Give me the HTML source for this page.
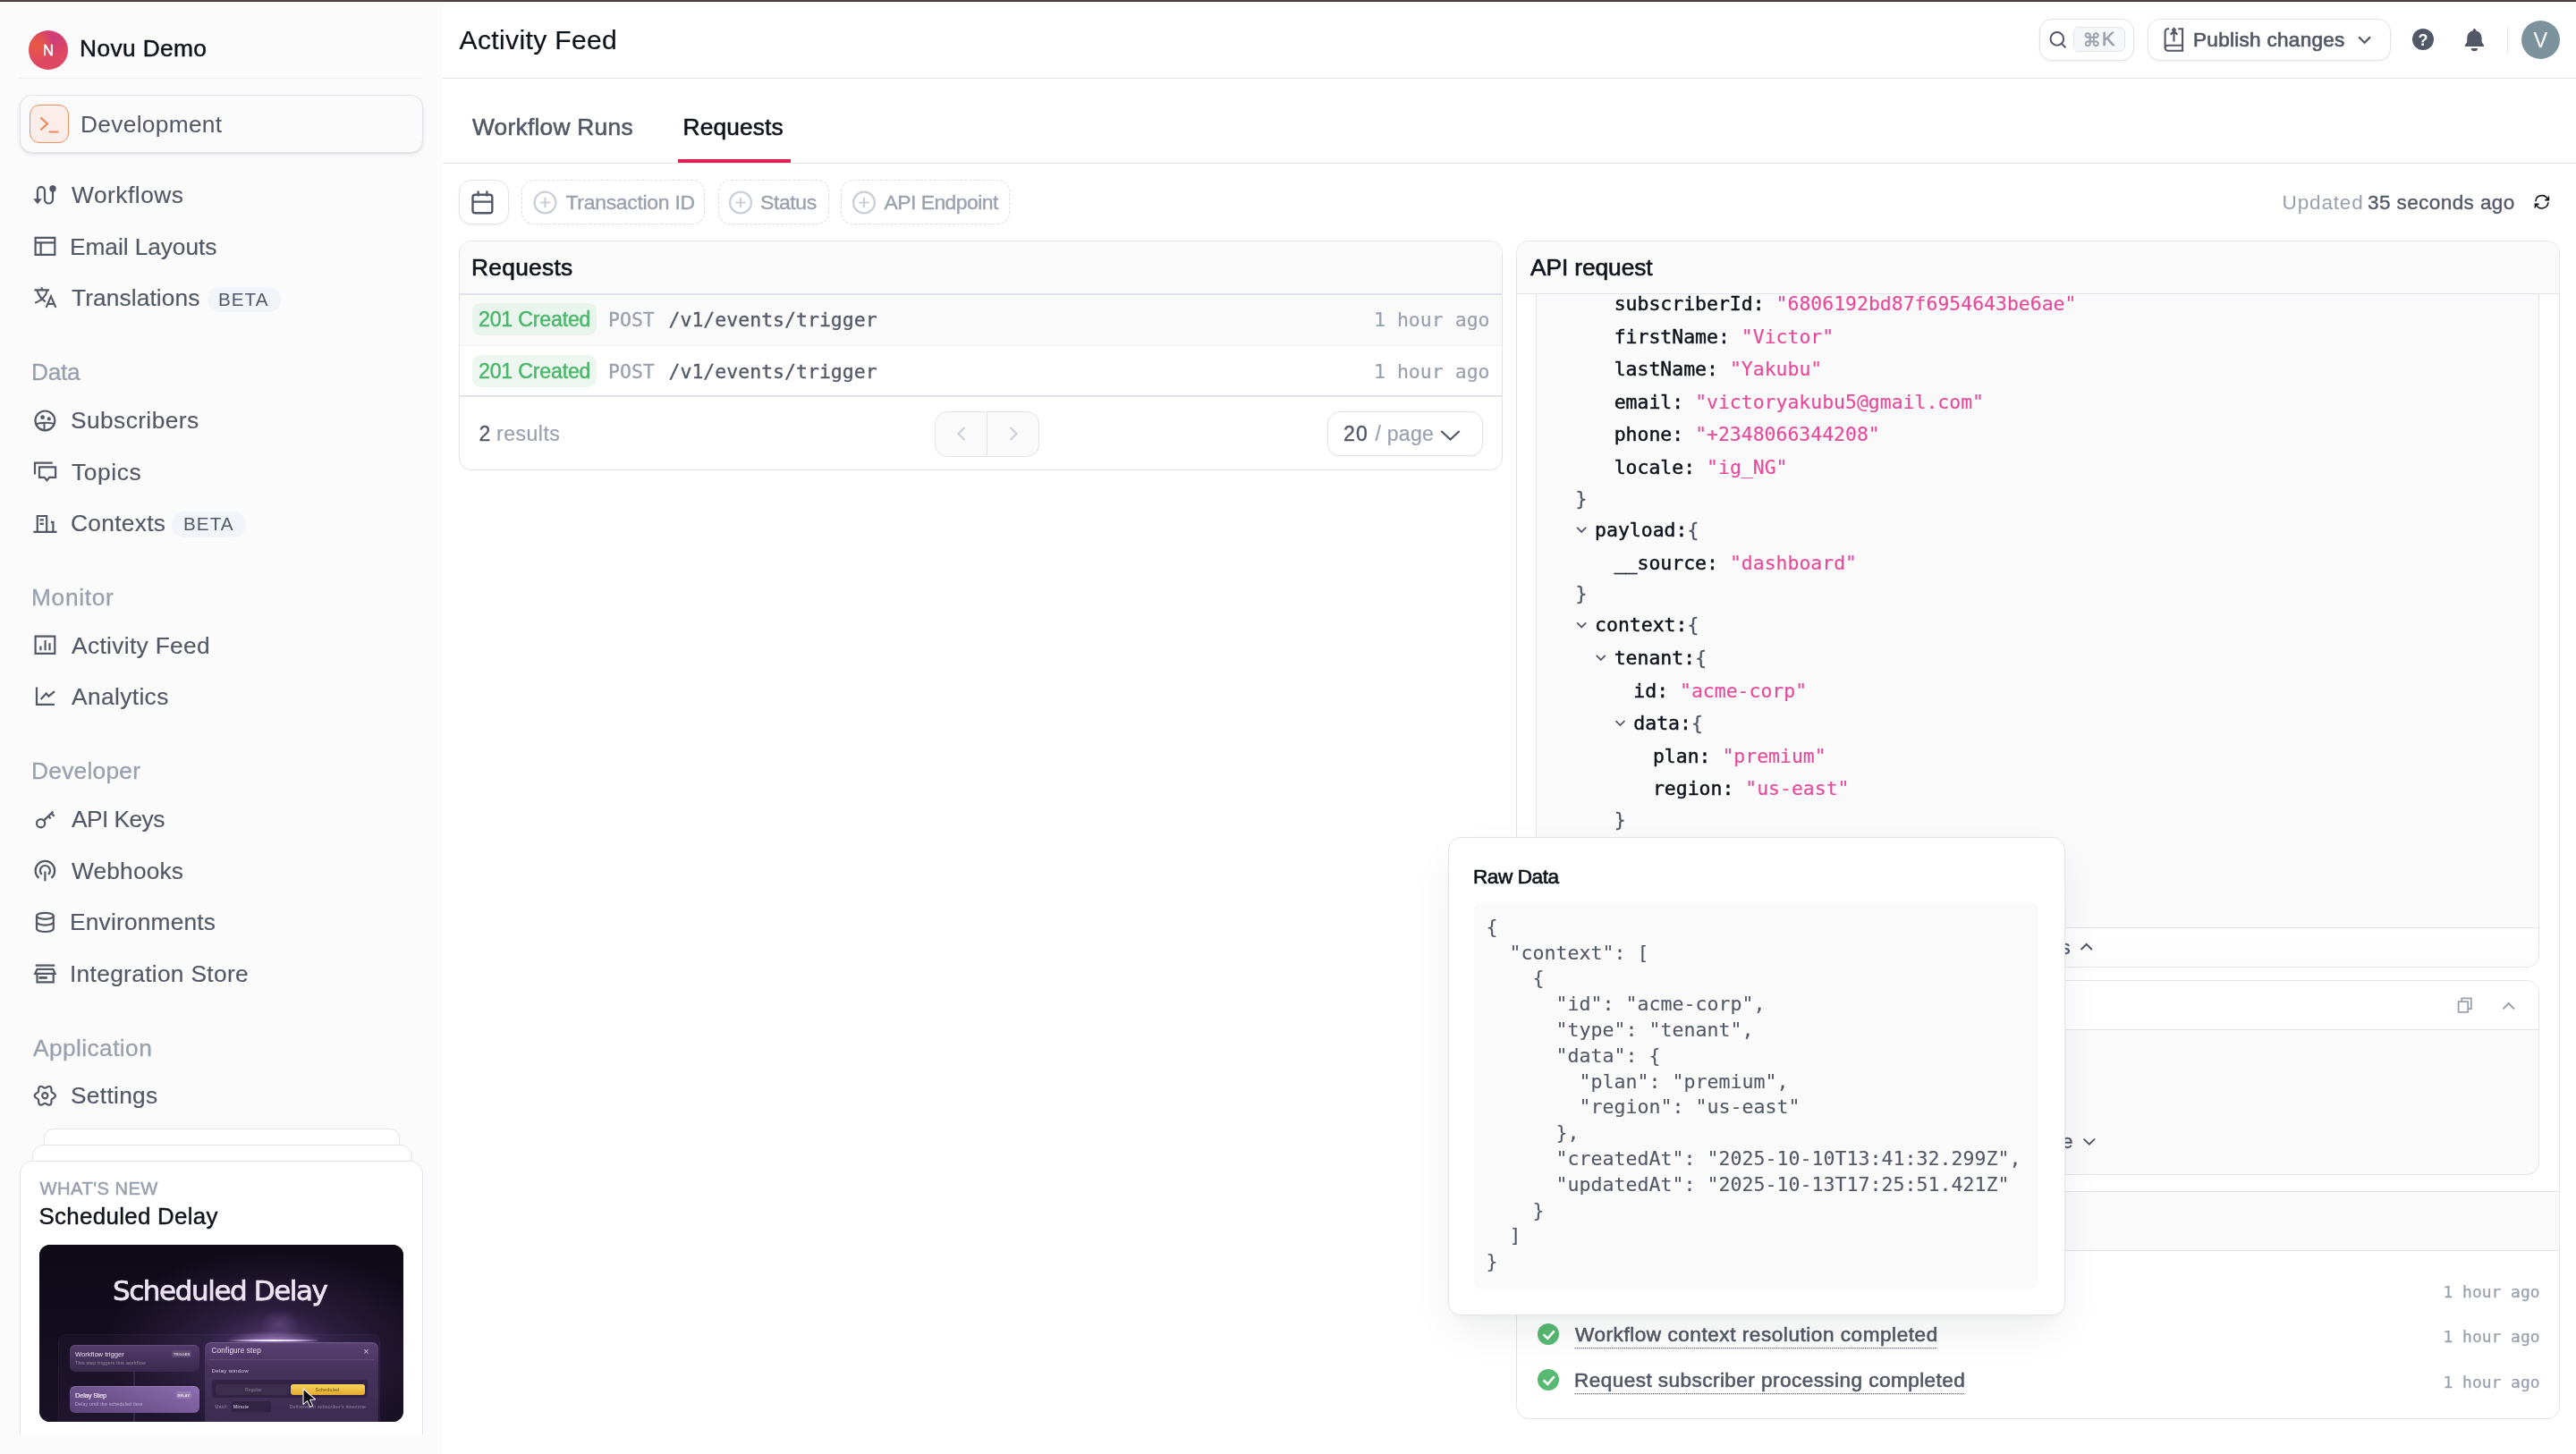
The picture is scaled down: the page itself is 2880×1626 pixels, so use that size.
<!DOCTYPE html>
<html lang="en"><head><meta charset="utf-8"><title>Activity Feed - Novu</title><style>
html,body{margin:0;padding:0;overflow:hidden}
body{width:2880px;height:1626px;overflow:hidden;position:relative;background:#fff;font-family:"Liberation Sans",sans-serif;}
#root{position:absolute;left:0;top:0;width:2880px;height:1626px;overflow:hidden;will-change:transform}
.b{position:absolute;box-sizing:border-box}
.t{position:absolute;white-space:pre;line-height:1;font-family:"Liberation Sans",sans-serif;-webkit-font-smoothing:antialiased}
</style></head>
<body>
<div id="root">
<div class="b" style="left:0px;top:3px;width:495px;height:1623px;background:#fbfbfb;"></div>
<div class="b" style="left:32px;top:34px;width:44px;height:44px;border-radius:50%;background:radial-gradient(circle at 22% 38%,#ea5a3f 0%,rgba(234,90,63,0) 42%),radial-gradient(circle at 62% 20%,#cb3c7a 0%,rgba(203,60,122,0) 45%),#de4862;"></div>
<span class="t" style="left:48.00px;top:47.81px;font-size:16.50px;color:#fff;-webkit-text-stroke:0.60px #fff;">N</span>
<span class="t" style="left:89.00px;top:41.27px;font-size:26.33px;color:#0e121b;letter-spacing:0.375px;-webkit-text-stroke:0.45px #0e121b;">Novu Demo</span>
<div class="b" style="left:22px;top:87px;width:451px;height:1px;background:#eef0f3;"></div>
<div class="b" style="left:22px;top:106px;width:451px;height:65px;border:1px solid #e1e4ea;border-radius:14px;background:#fbfbfc;box-shadow:0 2px 5px rgba(14,18,27,.08),0 1px 2px rgba(14,18,27,.05);"></div>
<div class="b" style="left:33px;top:117px;width:44px;height:43px;border:1px solid #f0905f;border-radius:11px;background:#fbeeea;"></div>
<span class="t" style="left:90.00px;top:125.77px;font-size:26.33px;color:#525866;letter-spacing:0.300px;">Development</span>
<span class="t" style="left:80.00px;top:204.77px;font-size:26.33px;color:#525866;letter-spacing:0.506px;-webkit-text-stroke:0.15px #525866;">Workflows</span>
<span class="t" style="left:78.00px;top:262.97px;font-size:26.33px;color:#525866;letter-spacing:-0.083px;-webkit-text-stroke:0.15px #525866;">Email Layouts</span>
<span class="t" style="left:80.00px;top:319.77px;font-size:26.33px;color:#525866;letter-spacing:0.086px;-webkit-text-stroke:0.15px #525866;">Translations</span>
<span class="t" style="left:35.00px;top:402.77px;font-size:26.33px;color:#99a0ae;letter-spacing:-0.350px;-webkit-text-stroke:0.30px #99a0ae;">Data</span>
<span class="t" style="left:79.00px;top:457.27px;font-size:26.33px;color:#525866;letter-spacing:0.405px;-webkit-text-stroke:0.15px #525866;">Subscribers</span>
<span class="t" style="left:80.00px;top:514.67px;font-size:26.33px;color:#525866;letter-spacing:0.600px;-webkit-text-stroke:0.15px #525866;">Topics</span>
<span class="t" style="left:79.00px;top:571.77px;font-size:26.33px;color:#525866;letter-spacing:0.293px;-webkit-text-stroke:0.15px #525866;">Contexts</span>
<span class="t" style="left:35.00px;top:654.52px;font-size:26.33px;color:#99a0ae;letter-spacing:0.667px;-webkit-text-stroke:0.30px #99a0ae;">Monitor</span>
<span class="t" style="left:80.00px;top:708.52px;font-size:26.33px;color:#525866;letter-spacing:0.333px;-webkit-text-stroke:0.15px #525866;">Activity Feed</span>
<span class="t" style="left:80.00px;top:766.07px;font-size:26.33px;color:#525866;letter-spacing:0.369px;-webkit-text-stroke:0.15px #525866;">Analytics</span>
<span class="t" style="left:35.00px;top:849.02px;font-size:26.33px;color:#99a0ae;letter-spacing:0.250px;-webkit-text-stroke:0.30px #99a0ae;">Developer</span>
<span class="t" style="left:80.00px;top:903.02px;font-size:26.33px;color:#525866;letter-spacing:-0.564px;-webkit-text-stroke:0.15px #525866;">API Keys</span>
<span class="t" style="left:80.00px;top:960.57px;font-size:26.33px;color:#525866;letter-spacing:0.150px;-webkit-text-stroke:0.15px #525866;">Webhooks</span>
<span class="t" style="left:78.00px;top:1018.07px;font-size:26.33px;color:#525866;letter-spacing:0.186px;-webkit-text-stroke:0.15px #525866;">Environments</span>
<span class="t" style="left:78.00px;top:1075.77px;font-size:26.33px;color:#525866;letter-spacing:0.309px;-webkit-text-stroke:0.15px #525866;">Integration Store</span>
<span class="t" style="left:37.00px;top:1158.52px;font-size:26.33px;color:#99a0ae;letter-spacing:0.400px;-webkit-text-stroke:0.30px #99a0ae;">Application</span>
<span class="t" style="left:79.00px;top:1212.27px;font-size:26.33px;color:#525866;letter-spacing:0.293px;-webkit-text-stroke:0.15px #525866;">Settings</span>
<div class="b" style="left:231.5px;top:320.5px;width:82px;height:28px;border-radius:14px;background:#f1f4f8;"></div>
<span class="t" style="left:244.00px;top:325.00px;font-size:20.69px;color:#525866;letter-spacing:1.000px;">BETA</span>
<div class="b" style="left:192px;top:572px;width:83px;height:28.5px;border-radius:14px;background:#f1f4f8;"></div>
<span class="t" style="left:205.00px;top:576.05px;font-size:20.69px;color:#525866;letter-spacing:1.017px;">BETA</span>
<div class="b" style="left:0;top:1250px;width:495px;height:353.5px;overflow:hidden"><div class="b" style="left:0;top:-1250px;width:495px;height:1700px"><div class="b" style="left:49px;top:1262px;width:398px;height:138px;border:1px solid #e1e4ea;border-radius:11px;background:#fff;"></div><div class="b" style="left:35.5px;top:1280px;width:425px;height:120px;border:1px solid #e1e4ea;border-radius:13px;background:#fff;"></div><div class="b" style="left:22px;top:1298px;width:451px;height:342px;border:1px solid #e1e4ea;border-radius:14px;background:#fff;"></div></div></div>
<span class="t" style="left:44.50px;top:1319.35px;font-size:20.20px;color:#99a0ae;letter-spacing:0.439px;-webkit-text-stroke:0.50px #99a0ae;">WHAT'S NEW</span>
<span class="t" style="left:43.50px;top:1347.97px;font-size:25.93px;color:#0e121b;letter-spacing:0.289px;-webkit-text-stroke:0.40px #0e121b;">Scheduled Delay</span>
<div class="b" style="left:44px;top:1392px;width:407px;height:198px;border-radius:12px;overflow:hidden;background:#0e0a17"><div class="b" style="left:0px;top:0px;width:407px;height:198px;background:radial-gradient(ellipse 46% 56% at 64% 58%,rgba(150,105,190,.50) 0%,rgba(98,66,135,.30) 40%,rgba(40,26,60,0) 100%),linear-gradient(180deg,#0e0a16 0%,#130d1e 50%,#191125 100%);"></div><div class="b" style="left:186px;top:92px;width:152px;height:30px;background:radial-gradient(ellipse 50% 50% at 50% 50%,rgba(214,178,255,.55),rgba(214,178,255,0) 70%);"></div><div class="b" style="left:211px;top:106px;width:102px;height:2px;background:linear-gradient(90deg,rgba(230,205,255,0),#ead6ff 30%,#ffffff 50%,#ead6ff 70%,rgba(230,205,255,0));border-radius:2px;"></div><div class="b" style="left:236px;top:60px;width:65px;height:48px;background:radial-gradient(ellipse 50% 50% at 50% 60%,rgba(190,150,235,.22),rgba(190,150,235,0) 70%);"></div><div class="b" style="left:21px;top:100px;width:360px;height:108px;border:1px solid rgba(255,255,255,.04);border-radius:9px;background:rgba(120,90,160,.07);"></div><div class="b" style="left:33.5px;top:111.5px;width:145px;height:30.5px;border-radius:6px;background:linear-gradient(180deg,#533c6a,#3a2a4e);box-shadow:inset 0 1px 0 rgba(255,255,255,.10);"></div><div class="b" style="left:33.5px;top:158px;width:145px;height:30px;border-radius:6px;background:linear-gradient(200deg,#8d6db0,#5c4379);box-shadow:inset 0 1px 0 rgba(255,255,255,.16);"></div><div class="b" style="left:105px;top:142px;width:1.5px;height:16px;background:#35274a;"></div><div class="b" style="left:105px;top:188px;width:1.5px;height:12px;background:#35274a;"></div><div class="b" style="left:185px;top:108.5px;width:193.5px;height:99.5px;border-radius:7px 7px 0 0;background:linear-gradient(180deg,#5a4273 0%,#46335c 30%,#3a2a4e 100%);box-shadow:inset 0 1px 0 rgba(255,255,255,.14);"></div><div class="b" style="left:189px;top:128.2px;width:185px;height:0.8px;background:rgba(255,255,255,.10);"></div><div class="b" style="left:193px;top:150.5px;width:174px;height:20.5px;border-radius:4px;background:rgba(20,12,32,.35);"></div><div class="b" style="left:196.5px;top:155.5px;width:82px;height:12px;border-radius:3px;background:rgba(255,255,255,.05);"></div><div class="b" style="left:281px;top:155.5px;width:83px;height:12px;border-radius:3px;background:linear-gradient(180deg,#f8d45c,#e4a92c);"></div><div class="b" style="left:214.5px;top:175px;width:44px;height:12px;border-radius:3px;background:rgba(20,12,32,.30);"></div><div class="b" style="left:148px;top:118.2px;width:22px;height:7.8px;border-radius:2px;background:rgba(255,255,255,.10);"></div><div class="b" style="left:153px;top:164.2px;width:17px;height:7.8px;border-radius:2px;background:rgba(255,255,255,.16);"></div></div>
<span class="t" style="left:126.00px;top:1428.07px;font-size:31.00px;color:#ece4f3;font-family:'DejaVu Sans', 'Liberation Sans', sans-serif;letter-spacing:-1.429px;-webkit-text-stroke:0.75px #ece4f3;">Scheduled Delay</span><span class="t" style="left:84.00px;top:1510.68px;font-size:7.60px;color:#e9def3;">Workflow trigger</span><span class="t" style="left:84.00px;top:1521.69px;font-size:5.20px;color:rgba(255,255,255,.42);letter-spacing:0.256px;">This step triggers this workflow</span><span class="t" style="left:194.00px;top:1513.99px;font-size:3.80px;color:rgba(255,255,255,.7);font-weight:700;letter-spacing:0.167px;">TRIGGER</span><span class="t" style="left:84.00px;top:1556.68px;font-size:7.60px;color:#f4ecfb;letter-spacing:-0.217px;-webkit-text-stroke:0.15px #f4ecfb;">Delay Step</span><span class="t" style="left:84.00px;top:1567.59px;font-size:5.20px;color:rgba(255,255,255,.55);letter-spacing:0.209px;">Delay until the scheduled time</span><span class="t" style="left:198.50px;top:1559.99px;font-size:3.80px;color:rgba(255,255,255,.8);font-weight:700;letter-spacing:0.250px;">DELAY</span><span class="t" style="left:236.50px;top:1507.38px;font-size:8.20px;color:#ebe1f4;letter-spacing:0.158px;">Configure step</span><span class="t" style="left:406.50px;top:1507.38px;font-size:10.00px;color:#d9cde6;">×</span><span class="t" style="left:236.50px;top:1530.08px;font-size:6.20px;color:#d9cbe8;letter-spacing:0.273px;">Delay window</span><span class="t" style="left:274.00px;top:1551.69px;font-size:5.00px;color:rgba(255,255,255,.38);letter-spacing:0.167px;">Regular</span><span class="t" style="left:352.50px;top:1551.69px;font-size:5.00px;color:#5b4412;letter-spacing:0.375px;">Scheduled</span><span class="t" style="left:240.50px;top:1571.49px;font-size:5.00px;color:rgba(255,255,255,.55);letter-spacing:0.590px;">Until:</span><span class="t" style="left:261.00px;top:1571.49px;font-size:5.00px;color:#e6dcf0;letter-spacing:0.400px;">Minute</span><span class="t" style="left:323.75px;top:1571.49px;font-size:5.00px;color:rgba(255,255,255,.42);letter-spacing:0.273px;">Delivered in subscriber's timezone</span>
<div class="b" style="left:0px;top:0px;width:2880px;height:2px;background:linear-gradient(180deg,#4f4443 0 50%,#433635 50% 100%);"></div>
<span class="t" style="left:513.50px;top:29.88px;font-size:30.10px;color:#0e121b;letter-spacing:0.338px;-webkit-text-stroke:0.20px #0e121b;">Activity Feed</span>
<div class="b" style="left:495px;top:87px;width:2385px;height:1px;background:#e1e4ea;"></div>
<div class="b" style="left:2280px;top:21px;width:106px;height:46.5px;border:1px solid #e1e4ea;border-radius:14px;background:#fff;box-shadow:0 1px 3px rgba(14,18,27,.06);"></div>
<div class="b" style="left:2318.4px;top:30.4px;width:57.3px;height:28px;border:1px solid #e1e4ea;border-radius:6px;background:#f6f7f9;"></div>
<span class="t" style="left:2328.50px;top:35.13px;font-size:20.50px;color:#99a0ae;font-family:'DejaVu Sans', 'Liberation Sans', sans-serif;-webkit-text-stroke:0.40px #99a0ae;">⌘</span>
<span class="t" style="left:2350.00px;top:33.10px;font-size:21.69px;color:#99a0ae;-webkit-text-stroke:0.60px #99a0ae;">K</span>
<div class="b" style="left:2401.3px;top:21px;width:271.4px;height:46.5px;border:1px solid #e1e4ea;border-radius:14px;background:#fff;box-shadow:0 1px 3px rgba(14,18,27,.06);"></div>
<span class="t" style="left:2452.00px;top:33.76px;font-size:22.57px;color:#525866;letter-spacing:0.271px;-webkit-text-stroke:0.70px #525866;">Publish changes</span>
<div class="b" style="left:2697.3px;top:32.4px;width:24px;height:24px;border-radius:50%;background:#525866;"></div>
<span class="t" style="left:2703.50px;top:35.55px;font-size:18.00px;color:#fff;font-weight:700;">?</span>
<div class="b" style="left:2803px;top:30px;width:1.2px;height:29px;background:#e1e4ea;"></div>
<div class="b" style="left:2819.1px;top:22.9px;width:43px;height:43px;border-radius:50%;background:#7c939d;"></div>
<span class="t" style="left:2832.50px;top:33.89px;font-size:23.50px;color:#fff;">V</span>
<span class="t" style="left:528.00px;top:128.77px;font-size:26.33px;color:#525866;letter-spacing:0.250px;-webkit-text-stroke:0.55px #525866;">Workflow Runs</span>
<span class="t" style="left:763.50px;top:128.77px;font-size:26.33px;color:#0e121b;letter-spacing:0.143px;-webkit-text-stroke:0.55px #0e121b;">Requests</span>
<div class="b" style="left:757.5px;top:178px;width:126.5px;height:4px;background:#dd2450;"></div>
<div class="b" style="left:495px;top:182px;width:2385px;height:1px;background:#e1e4ea;"></div>
<div class="b" style="left:513px;top:201px;width:56px;height:50px;border:1px solid #e1e4ea;border-radius:14px;background:#fff;box-shadow:0 1px 3px rgba(14,18,27,.06);"></div>
<div class="b" style="left:583px;top:201px;width:205px;height:50px;border:1px dashed #dde0e7;border-radius:14px;background:#fff;box-shadow:0 1px 3px rgba(14,18,27,.04);"></div>
<span class="t" style="left:632.50px;top:214.76px;font-size:22.97px;color:#99a0ae;letter-spacing:-0.304px;-webkit-text-stroke:0.35px #99a0ae;">Transaction ID</span>
<div class="b" style="left:803px;top:201px;width:123.5px;height:50px;border:1px dashed #dde0e7;border-radius:14px;background:#fff;box-shadow:0 1px 3px rgba(14,18,27,.04);"></div>
<span class="t" style="left:850.00px;top:214.76px;font-size:22.97px;color:#99a0ae;letter-spacing:-0.400px;-webkit-text-stroke:0.35px #99a0ae;">Status</span>
<div class="b" style="left:940px;top:201px;width:189px;height:50px;border:1px dashed #dde0e7;border-radius:14px;background:#fff;box-shadow:0 1px 3px rgba(14,18,27,.04);"></div>
<span class="t" style="left:988.50px;top:214.76px;font-size:22.97px;color:#99a0ae;letter-spacing:-0.569px;-webkit-text-stroke:0.35px #99a0ae;">API Endpoint</span>
<span class="t" style="left:2551.50px;top:215.66px;font-size:22.57px;color:#99a0ae;letter-spacing:0.833px;">Updated</span>
<span class="t" style="left:2647.00px;top:215.66px;font-size:22.57px;color:#525866;letter-spacing:0.385px;-webkit-text-stroke:0.35px #525866;">35 seconds ago</span>
<div class="b" style="left:513px;top:269px;width:1167px;height:257px;border:1px solid #e1e4ea;border-radius:14px;background:#fff;box-shadow:0 1px 2px rgba(14,18,27,.03);"></div>
<div class="b" style="left:514px;top:270px;width:1165px;height:58px;background:#fafafa;border-radius:13px 13px 0 0;"></div>
<div class="b" style="left:514px;top:328px;width:1165px;height:2px;background:#dfe2e9;"></div>
<div class="b" style="left:514px;top:330px;width:1165px;height:56px;background:#fafafa;"></div>
<div class="b" style="left:514px;top:386px;width:1165px;height:1px;background:#eef0f3;"></div>
<div class="b" style="left:514px;top:442px;width:1165px;height:2px;background:#e1e4ea;"></div>
<span class="t" style="left:527.00px;top:285.52px;font-size:26.33px;color:#0e121b;letter-spacing:0.279px;-webkit-text-stroke:0.60px #0e121b;">Requests</span>
<div class="b" style="left:528px;top:339px;width:139px;height:36px;border-radius:9px;background:#e9f5ec;"></div>
<span class="t" style="left:535.00px;top:346.06px;font-size:23.17px;color:#4ab56b;letter-spacing:-0.200px;-webkit-text-stroke:0.45px #4ab56b;">201 Created</span>
<span class="t" style="left:680.00px;top:346.83px;font-size:21.53px;color:#99a0ae;font-family:'DejaVu Sans Mono', 'Liberation Mono', monospace;-webkit-text-stroke:0.30px #99a0ae;">POST</span>
<span class="t" style="left:747.50px;top:346.83px;font-size:21.53px;color:#525866;font-family:'DejaVu Sans Mono', 'Liberation Mono', monospace;-webkit-text-stroke:0.30px #525866;">/v1/events/trigger</span>
<span class="t" style="left:1536.00px;top:346.83px;font-size:21.53px;color:#99a0ae;font-family:'DejaVu Sans Mono', 'Liberation Mono', monospace;-webkit-text-stroke:0.20px #99a0ae;">1 hour ago</span>
<div class="b" style="left:528px;top:397px;width:139px;height:36px;border-radius:9px;background:#edf7f0;"></div>
<span class="t" style="left:535.00px;top:404.06px;font-size:23.17px;color:#4ab56b;letter-spacing:-0.200px;-webkit-text-stroke:0.45px #4ab56b;">201 Created</span>
<span class="t" style="left:680.00px;top:404.83px;font-size:21.53px;color:#99a0ae;font-family:'DejaVu Sans Mono', 'Liberation Mono', monospace;-webkit-text-stroke:0.30px #99a0ae;">POST</span>
<span class="t" style="left:747.50px;top:404.83px;font-size:21.53px;color:#525866;font-family:'DejaVu Sans Mono', 'Liberation Mono', monospace;-webkit-text-stroke:0.30px #525866;">/v1/events/trigger</span>
<span class="t" style="left:1536.00px;top:404.83px;font-size:21.53px;color:#99a0ae;font-family:'DejaVu Sans Mono', 'Liberation Mono', monospace;-webkit-text-stroke:0.20px #99a0ae;">1 hour ago</span>
<span class="t" style="left:535.50px;top:473.91px;font-size:23.07px;color:#525866;-webkit-text-stroke:0.35px #525866;">2</span>
<span class="t" style="left:555.00px;top:473.91px;font-size:23.07px;color:#99a0ae;letter-spacing:0.492px;-webkit-text-stroke:0.20px #99a0ae;">results</span>
<div class="b" style="left:1045px;top:460px;width:117px;height:51px;border:1px solid #e1e4ea;border-radius:14px;background:#fafafb;"></div>
<div class="b" style="left:1103px;top:461px;width:1px;height:49px;background:#e1e4ea;"></div>
<div class="b" style="left:1484px;top:460px;width:174px;height:50px;border:1px solid #e1e4ea;border-radius:14px;background:#fff;box-shadow:0 1px 3px rgba(14,18,27,.06);"></div>
<span class="t" style="left:1502.00px;top:473.81px;font-size:23.07px;color:#525866;letter-spacing:1.260px;-webkit-text-stroke:0.40px #525866;">20</span>
<span class="t" style="left:1537.50px;top:473.81px;font-size:23.07px;color:#99a0ae;letter-spacing:0.242px;-webkit-text-stroke:0.20px #99a0ae;">/ page</span>
<div class="b" style="left:1695px;top:269px;width:1167px;height:1318px;border:1px solid #e1e4ea;border-radius:14px;background:#fff;"></div>
<div class="b" style="left:1717px;top:329px;width:1122px;height:753px;border:1px solid #e1e4ea;border-top:none;border-radius:0 0 14px 14px;background:#fafafb;"></div>
<div class="b" style="left:1718px;top:1037px;width:1120px;height:44px;background:linear-gradient(180deg,#ffffff,#fcfcfd);border-top:1px solid #e1e4ea;border-radius:0 0 13px 13px;"></div>
<div class="b" style="left:1696px;top:270px;width:1165px;height:58px;background:#fafafa;border-radius:13px 13px 0 0;"></div>
<div class="b" style="left:1696px;top:328px;width:1165px;height:1px;background:#e1e4ea;"></div>
<div class="b" style="left:1717px;top:1096px;width:1122px;height:218px;border:1px solid #e1e4ea;border-radius:14px;background:#fafafb;"></div>
<div class="b" style="left:1718px;top:1097px;width:1120px;height:54px;background:#fff;border-radius:13px 13px 0 0;"></div>
<div class="b" style="left:1718px;top:1151px;width:1120px;height:1px;background:#e1e4ea;"></div>
<div class="b" style="left:1696px;top:1332px;width:1165px;height:67px;background:#fafafa;border-top:1px solid #e1e4ea;border-bottom:1px solid #e1e4ea;"></div>
<span class="t" style="left:1711.00px;top:285.97px;font-size:26.33px;color:#0e121b;letter-spacing:-0.100px;-webkit-text-stroke:0.60px #0e121b;">API request</span>
<span class="t" style="left:1804.70px;top:329.04px;font-size:21.46px;color:#0e121b;font-family:'DejaVu Sans Mono', 'Liberation Mono', monospace;-webkit-text-stroke:0.45px #0e121b;">subscriberId</span>
<span class="t" style="left:1959.74px;top:329.04px;font-size:21.46px;color:#0e121b;font-family:'DejaVu Sans Mono', 'Liberation Mono', monospace;-webkit-text-stroke:0.45px #0e121b;">:</span>
<span class="t" style="left:1985.58px;top:329.04px;font-size:21.46px;color:#e8479a;font-family:'DejaVu Sans Mono', 'Liberation Mono', monospace;-webkit-text-stroke:0.12px #e8479a;">"6806192bd87f6954643be6ae"</span>
<span class="t" style="left:1804.70px;top:365.60px;font-size:21.46px;color:#0e121b;font-family:'DejaVu Sans Mono', 'Liberation Mono', monospace;-webkit-text-stroke:0.45px #0e121b;">firstName</span>
<span class="t" style="left:1920.98px;top:365.60px;font-size:21.46px;color:#0e121b;font-family:'DejaVu Sans Mono', 'Liberation Mono', monospace;-webkit-text-stroke:0.45px #0e121b;">:</span>
<span class="t" style="left:1946.82px;top:365.60px;font-size:21.46px;color:#e8479a;font-family:'DejaVu Sans Mono', 'Liberation Mono', monospace;-webkit-text-stroke:0.12px #e8479a;">"Victor"</span>
<span class="t" style="left:1804.70px;top:402.16px;font-size:21.46px;color:#0e121b;font-family:'DejaVu Sans Mono', 'Liberation Mono', monospace;-webkit-text-stroke:0.45px #0e121b;">lastName</span>
<span class="t" style="left:1908.06px;top:402.16px;font-size:21.46px;color:#0e121b;font-family:'DejaVu Sans Mono', 'Liberation Mono', monospace;-webkit-text-stroke:0.45px #0e121b;">:</span>
<span class="t" style="left:1933.90px;top:402.16px;font-size:21.46px;color:#e8479a;font-family:'DejaVu Sans Mono', 'Liberation Mono', monospace;-webkit-text-stroke:0.12px #e8479a;">"Yakubu"</span>
<span class="t" style="left:1804.70px;top:438.72px;font-size:21.46px;color:#0e121b;font-family:'DejaVu Sans Mono', 'Liberation Mono', monospace;-webkit-text-stroke:0.45px #0e121b;">email</span>
<span class="t" style="left:1869.30px;top:438.72px;font-size:21.46px;color:#0e121b;font-family:'DejaVu Sans Mono', 'Liberation Mono', monospace;-webkit-text-stroke:0.45px #0e121b;">:</span>
<span class="t" style="left:1895.14px;top:438.72px;font-size:21.46px;color:#e8479a;font-family:'DejaVu Sans Mono', 'Liberation Mono', monospace;-webkit-text-stroke:0.12px #e8479a;">"victoryakubu5@gmail.com"</span>
<span class="t" style="left:1804.70px;top:475.28px;font-size:21.46px;color:#0e121b;font-family:'DejaVu Sans Mono', 'Liberation Mono', monospace;-webkit-text-stroke:0.45px #0e121b;">phone</span>
<span class="t" style="left:1869.30px;top:475.28px;font-size:21.46px;color:#0e121b;font-family:'DejaVu Sans Mono', 'Liberation Mono', monospace;-webkit-text-stroke:0.45px #0e121b;">:</span>
<span class="t" style="left:1895.14px;top:475.28px;font-size:21.46px;color:#e8479a;font-family:'DejaVu Sans Mono', 'Liberation Mono', monospace;-webkit-text-stroke:0.12px #e8479a;">"+2348066344208"</span>
<span class="t" style="left:1804.70px;top:511.84px;font-size:21.46px;color:#0e121b;font-family:'DejaVu Sans Mono', 'Liberation Mono', monospace;-webkit-text-stroke:0.45px #0e121b;">locale</span>
<span class="t" style="left:1882.22px;top:511.84px;font-size:21.46px;color:#0e121b;font-family:'DejaVu Sans Mono', 'Liberation Mono', monospace;-webkit-text-stroke:0.45px #0e121b;">:</span>
<span class="t" style="left:1908.06px;top:511.84px;font-size:21.46px;color:#e8479a;font-family:'DejaVu Sans Mono', 'Liberation Mono', monospace;-webkit-text-stroke:0.12px #e8479a;">"ig_NG"</span>
<span class="t" style="left:1761.50px;top:546.82px;font-size:21.46px;color:#525866;font-family:'DejaVu Sans Mono', 'Liberation Mono', monospace;-webkit-text-stroke:0.30px #525866;">}</span>
<span class="t" style="left:1783.10px;top:581.80px;font-size:21.46px;color:#0e121b;font-family:'DejaVu Sans Mono', 'Liberation Mono', monospace;-webkit-text-stroke:0.45px #0e121b;">payload</span>
<span class="t" style="left:1873.54px;top:581.80px;font-size:21.46px;color:#0e121b;font-family:'DejaVu Sans Mono', 'Liberation Mono', monospace;-webkit-text-stroke:0.45px #0e121b;">:</span>
<span class="t" style="left:1886.46px;top:581.80px;font-size:21.46px;color:#525866;font-family:'DejaVu Sans Mono', 'Liberation Mono', monospace;-webkit-text-stroke:0.30px #525866;">{</span>
<span class="t" style="left:1804.70px;top:618.88px;font-size:21.46px;color:#0e121b;font-family:'DejaVu Sans Mono', 'Liberation Mono', monospace;-webkit-text-stroke:0.45px #0e121b;">__source</span>
<span class="t" style="left:1908.06px;top:618.88px;font-size:21.46px;color:#0e121b;font-family:'DejaVu Sans Mono', 'Liberation Mono', monospace;-webkit-text-stroke:0.45px #0e121b;">:</span>
<span class="t" style="left:1933.90px;top:618.88px;font-size:21.46px;color:#e8479a;font-family:'DejaVu Sans Mono', 'Liberation Mono', monospace;-webkit-text-stroke:0.12px #e8479a;">"dashboard"</span>
<span class="t" style="left:1761.50px;top:653.34px;font-size:21.46px;color:#525866;font-family:'DejaVu Sans Mono', 'Liberation Mono', monospace;-webkit-text-stroke:0.30px #525866;">}</span>
<span class="t" style="left:1783.10px;top:688.32px;font-size:21.46px;color:#0e121b;font-family:'DejaVu Sans Mono', 'Liberation Mono', monospace;-webkit-text-stroke:0.45px #0e121b;">context</span>
<span class="t" style="left:1873.54px;top:688.32px;font-size:21.46px;color:#0e121b;font-family:'DejaVu Sans Mono', 'Liberation Mono', monospace;-webkit-text-stroke:0.45px #0e121b;">:</span>
<span class="t" style="left:1886.46px;top:688.32px;font-size:21.46px;color:#525866;font-family:'DejaVu Sans Mono', 'Liberation Mono', monospace;-webkit-text-stroke:0.30px #525866;">{</span>
<span class="t" style="left:1804.70px;top:724.88px;font-size:21.46px;color:#0e121b;font-family:'DejaVu Sans Mono', 'Liberation Mono', monospace;-webkit-text-stroke:0.45px #0e121b;">tenant</span>
<span class="t" style="left:1882.22px;top:724.88px;font-size:21.46px;color:#0e121b;font-family:'DejaVu Sans Mono', 'Liberation Mono', monospace;-webkit-text-stroke:0.45px #0e121b;">:</span>
<span class="t" style="left:1895.14px;top:724.88px;font-size:21.46px;color:#525866;font-family:'DejaVu Sans Mono', 'Liberation Mono', monospace;-webkit-text-stroke:0.30px #525866;">{</span>
<span class="t" style="left:1826.30px;top:762.04px;font-size:21.46px;color:#0e121b;font-family:'DejaVu Sans Mono', 'Liberation Mono', monospace;-webkit-text-stroke:0.45px #0e121b;">id</span>
<span class="t" style="left:1852.14px;top:762.04px;font-size:21.46px;color:#0e121b;font-family:'DejaVu Sans Mono', 'Liberation Mono', monospace;-webkit-text-stroke:0.45px #0e121b;">:</span>
<span class="t" style="left:1877.98px;top:762.04px;font-size:21.46px;color:#e8479a;font-family:'DejaVu Sans Mono', 'Liberation Mono', monospace;-webkit-text-stroke:0.12px #e8479a;">"acme-corp"</span>
<span class="t" style="left:1826.30px;top:798.00px;font-size:21.46px;color:#0e121b;font-family:'DejaVu Sans Mono', 'Liberation Mono', monospace;-webkit-text-stroke:0.45px #0e121b;">data</span>
<span class="t" style="left:1877.98px;top:798.00px;font-size:21.46px;color:#0e121b;font-family:'DejaVu Sans Mono', 'Liberation Mono', monospace;-webkit-text-stroke:0.45px #0e121b;">:</span>
<span class="t" style="left:1890.90px;top:798.00px;font-size:21.46px;color:#525866;font-family:'DejaVu Sans Mono', 'Liberation Mono', monospace;-webkit-text-stroke:0.30px #525866;">{</span>
<span class="t" style="left:1847.90px;top:834.56px;font-size:21.46px;color:#0e121b;font-family:'DejaVu Sans Mono', 'Liberation Mono', monospace;-webkit-text-stroke:0.45px #0e121b;">plan</span>
<span class="t" style="left:1899.58px;top:834.56px;font-size:21.46px;color:#0e121b;font-family:'DejaVu Sans Mono', 'Liberation Mono', monospace;-webkit-text-stroke:0.45px #0e121b;">:</span>
<span class="t" style="left:1925.42px;top:834.56px;font-size:21.46px;color:#e8479a;font-family:'DejaVu Sans Mono', 'Liberation Mono', monospace;-webkit-text-stroke:0.12px #e8479a;">"premium"</span>
<span class="t" style="left:1847.90px;top:871.12px;font-size:21.46px;color:#0e121b;font-family:'DejaVu Sans Mono', 'Liberation Mono', monospace;-webkit-text-stroke:0.45px #0e121b;">region</span>
<span class="t" style="left:1925.42px;top:871.12px;font-size:21.46px;color:#0e121b;font-family:'DejaVu Sans Mono', 'Liberation Mono', monospace;-webkit-text-stroke:0.45px #0e121b;">:</span>
<span class="t" style="left:1951.26px;top:871.12px;font-size:21.46px;color:#e8479a;font-family:'DejaVu Sans Mono', 'Liberation Mono', monospace;-webkit-text-stroke:0.12px #e8479a;">"us-east"</span>
<span class="t" style="left:1804.70px;top:906.10px;font-size:21.46px;color:#525866;font-family:'DejaVu Sans Mono', 'Liberation Mono', monospace;-webkit-text-stroke:0.30px #525866;">}</span>
<span class="t" style="left:1783.10px;top:939.50px;font-size:21.46px;color:#525866;font-family:'DejaVu Sans Mono', 'Liberation Mono', monospace;-webkit-text-stroke:0.30px #525866;">}</span>
<span class="t" style="left:1761.50px;top:972.90px;font-size:21.46px;color:#525866;font-family:'DejaVu Sans Mono', 'Liberation Mono', monospace;-webkit-text-stroke:0.30px #525866;">}</span>
<span class="t" style="left:2212.00px;top:1048.66px;font-size:22.57px;color:#525866;-webkit-text-stroke:0.35px #525866;">Show less</span>
<span class="t" style="left:2211.50px;top:1265.96px;font-size:22.57px;color:#525866;letter-spacing:-1.012px;-webkit-text-stroke:0.35px #525866;">Show more</span>
<div class="b" style="left:1719.4px;top:1429.3px;width:24px;height:24px;border-radius:50%;background:#58b972;box-shadow:0 0 0 2px #fff,0 1px 3px rgba(14,18,27,.12);"></div>
<span class="t" style="left:2731.50px;top:1435.82px;font-size:17.94px;color:#99a0ae;font-family:'DejaVu Sans Mono', 'Liberation Mono', monospace;-webkit-text-stroke:0.25px #99a0ae;">1 hour ago</span>
<div class="b" style="left:1719.4px;top:1480.3px;width:24px;height:24px;border-radius:50%;background:#58b972;box-shadow:0 0 0 2px #fff,0 1px 3px rgba(14,18,27,.12);"></div>
<span class="t" style="left:1761.00px;top:1481.96px;font-size:22.57px;color:#525866;letter-spacing:0.538px;-webkit-text-stroke:0.60px #525866;">Workflow context resolution completed</span>
<span class="t" style="left:2731.50px;top:1486.22px;font-size:17.94px;color:#99a0ae;font-family:'DejaVu Sans Mono', 'Liberation Mono', monospace;-webkit-text-stroke:0.25px #99a0ae;">1 hour ago</span>
<div class="b" style="left:1719.4px;top:1531.3px;width:24px;height:24px;border-radius:50%;background:#58b972;box-shadow:0 0 0 2px #fff,0 1px 3px rgba(14,18,27,.12);"></div>
<span class="t" style="left:1760.00px;top:1532.96px;font-size:22.57px;color:#525866;letter-spacing:0.439px;-webkit-text-stroke:0.60px #525866;">Request subscriber processing completed</span>
<span class="t" style="left:2731.50px;top:1536.82px;font-size:17.94px;color:#99a0ae;font-family:'DejaVu Sans Mono', 'Liberation Mono', monospace;-webkit-text-stroke:0.25px #99a0ae;">1 hour ago</span>
<svg class="b" style="left:0;top:0" width="2880" height="1626" viewBox="0 0 2880 1626"><path d="M45.5 131.4 L53 138.4 L45.5 145.3 M54.7 147.5 H65.4" fill="none" stroke="#ef8550" stroke-width="2.1"/><path d="M42 224 V213.2 a4 4 0 0 1 8 0 V223 a4.5 4.5 0 0 0 9 0 V214" fill="none" stroke="#525866" stroke-width="2.2"/><path d="M37.2 222.3 H46.8 L42 228.2 Z" fill="#525866"/><circle cx="59" cy="211" r="3.7" fill="#525866"/><path d="M39.6 265.9 H61.3 V284.9 H39.6 Z M39.6 271.4 H61.3 M45.6 271.4 V284.9" fill="none" stroke="#525866" stroke-width="2.2"/><path d="M38.5 324.4 H55 M46.7 321.2 V324.4 M52.8 324.6 C51.5 331 46 336.6 39.2 338.7 M41.5 324.6 C43 330 46.5 334.6 50.8 337.4 M51.6 343.9 L57 331.4 L62.4 343.9 M53.4 339.9 H60.6" fill="none" stroke="#525866" stroke-width="2.1"/><circle cx="50.4" cy="470.4" r="10.9" fill="none" stroke="#525866" stroke-width="2.2"/><circle cx="47.6" cy="466.7" r="2.4" fill="#525866"/><circle cx="54.8" cy="468.4" r="2.1" fill="#525866"/><path d="M40.2 474.6 C44 472.1 57 472.1 60.6 474.3 M49.5 473 V481" fill="none" stroke="#525866" stroke-width="2"/><path d="M39 530.6 V517.6 H58.8 M44 522.3 H62.1 V533.9 H55.2 L52.4 537.2 L49.6 533.9 H44 Z" fill="none" stroke="#525866" stroke-width="2.2"/><path d="M37.4 594.8 H63.5 M41.8 594.8 V577 H52.2 V594.8 M56.9 583.9 H59.4 V594.8 M44.5 581.4 H48.9 M44.5 585.8 H48.9" fill="none" stroke="#525866" stroke-width="2.2"/><path d="M39.6 711.6 H61.3 V730.9 H39.6 Z M45.4 722.6 V727.2 M50.6 716 V727.2 M55.5 719.3 V727.2" fill="none" stroke="#525866" stroke-width="2.2"/><path d="M41 768.5 V787.9 H61 M45.6 782 L51.7 775.4 L54.4 778.7 L61 773.2" fill="none" stroke="#525866" stroke-width="2.2"/><circle cx="45.6" cy="920.8" r="4.6" fill="none" stroke="#525866" stroke-width="2.2"/><path d="M48.9 917.6 L59.4 907.6 M57.6 909.6 L60.6 912.8 M54.2 912.8 L56.6 915.4" fill="none" stroke="#525866" stroke-width="2.2"/><path d="M43.4 981.9 A10.8 10.8 0 1 1 57.4 981.9 M46.8 977.9 A5.6 5.6 0 1 1 54 977.9 M50.4 974.5 V985.2" fill="none" stroke="#525866" stroke-width="2.2"/><ellipse cx="50.4" cy="1024.3" rx="9.4" ry="3.5" fill="none" stroke="#525866" stroke-width="2.2"/><path d="M41 1024.3 V1038.4 A9.4 3.6 0 0 0 59.8 1038.4 V1024.3 M41 1031 A9.4 3.6 0 0 0 59.8 1031" fill="none" stroke="#525866" stroke-width="2.2"/><path d="M39.8 1079.7 H61.2 M41.6 1083.8 H59.4 L61.6 1088.9 H39.2 Z M41.5 1089 V1098.4 H59.7 V1089" fill="none" stroke="#525866" stroke-width="2.2"/><rect x="43.5" y="1092" width="9.3" height="2.8" fill="#525866"/><path d="M50.30 1216.75 L50.75 1216.69 L51.22 1216.50 L51.74 1216.22 L52.30 1215.89 L52.91 1215.54 L53.57 1215.24 L54.25 1215.02 L54.92 1214.93 L55.55 1214.99 L56.12 1215.21 L56.60 1215.59 L56.97 1216.11 L57.23 1216.74 L57.38 1217.44 L57.44 1218.16 L57.45 1218.86 L57.44 1219.52 L57.46 1220.10 L57.53 1220.60 L57.70 1221.02 L57.99 1221.38 L58.38 1221.70 L58.88 1222.01 L59.45 1222.33 L60.06 1222.69 L60.65 1223.10 L61.18 1223.58 L61.59 1224.11 L61.86 1224.69 L61.95 1225.30 L61.86 1225.91 L61.59 1226.49 L61.18 1227.02 L60.65 1227.50 L60.06 1227.91 L59.45 1228.27 L58.88 1228.59 L58.38 1228.90 L57.99 1229.22 L57.70 1229.58 L57.53 1230.00 L57.46 1230.50 L57.44 1231.08 L57.45 1231.74 L57.44 1232.44 L57.38 1233.16 L57.23 1233.86 L56.97 1234.49 L56.60 1235.01 L56.12 1235.39 L55.55 1235.61 L54.92 1235.67 L54.25 1235.58 L53.57 1235.36 L52.91 1235.06 L52.30 1234.71 L51.74 1234.38 L51.22 1234.10 L50.75 1233.91 L50.30 1233.85 L49.85 1233.91 L49.38 1234.10 L48.86 1234.38 L48.30 1234.71 L47.69 1235.06 L47.03 1235.36 L46.35 1235.58 L45.68 1235.67 L45.05 1235.61 L44.47 1235.39 L44.00 1235.01 L43.63 1234.49 L43.37 1233.86 L43.22 1233.16 L43.16 1232.44 L43.15 1231.74 L43.16 1231.08 L43.14 1230.50 L43.07 1230.00 L42.90 1229.58 L42.61 1229.22 L42.22 1228.90 L41.72 1228.59 L41.15 1228.27 L40.54 1227.91 L39.95 1227.50 L39.42 1227.02 L39.01 1226.49 L38.74 1225.91 L38.65 1225.30 L38.74 1224.69 L39.01 1224.11 L39.42 1223.58 L39.95 1223.10 L40.54 1222.69 L41.15 1222.33 L41.72 1222.01 L42.22 1221.70 L42.61 1221.38 L42.90 1221.02 L43.07 1220.60 L43.14 1220.10 L43.16 1219.52 L43.15 1218.86 L43.16 1218.16 L43.22 1217.44 L43.37 1216.74 L43.63 1216.11 L44.00 1215.59 L44.47 1215.21 L45.05 1214.99 L45.68 1214.93 L46.35 1215.02 L47.03 1215.24 L47.69 1215.54 L48.30 1215.89 L48.86 1216.22 L49.38 1216.50 L49.85 1216.69 Z" fill="none" stroke="#525866" stroke-width="2.2" stroke-linejoin="round"/><circle cx="50.3" cy="1225.3" r="3.1" fill="none" stroke="#525866" stroke-width="2.2"/><circle cx="2299.8" cy="43.4" r="7.3" fill="none" stroke="#525866" stroke-width="2"/><path d="M2305 48.7 L2309.4 53.3" stroke="#525866" stroke-width="2"/><path d="M2425.2 32.3 H2423.8 a3.2 3.2 0 0 0 -3.2 3.2 V53.4 a3.4 3.4 0 0 0 3.4 3.4 H2440.1 V32.3 H2435.2 M2420.6 54 a3.2 3.2 0 0 1 3.2 -3.2 H2440.1 M2430.5 46.6 V33.4 M2426.7 38.8 L2430.5 34.6 L2434.3 38.8 M2428.4 34.2 L2430.5 31.9 L2432.6 34.2" fill="none" stroke="#525866" stroke-width="2.1"/><path d="M2637.2 41.4 L2643.6 47.8 L2650 41.4" fill="none" stroke="#525866" stroke-width="2.2"/><path d="M2766.4 32 a1.6 1.6 0 0 1 1.6 1.6 v0.7 a8.2 8.2 0 0 1 6.6 8 v4.6 l2.4 3.7 v1.3 h-21.2 v-1.3 l2.4 -3.7 v-4.6 a8.2 8.2 0 0 1 6.6 -8 v-0.7 a1.6 1.6 0 0 1 1.6 -1.6 z M2762.8 54 h7.2 a3.6 3.3 0 0 1 -7.2 0 z" fill="#525866"/><rect x="528.5" y="217.7" width="21.8" height="20.5" rx="2.8" fill="none" stroke="#525866" stroke-width="2.4"/><path d="M528.5 225.6 H550.3 M534.6 213.4 V219.6 M544.4 213.4 V219.6" fill="none" stroke="#525866" stroke-width="2.4"/><circle cx="609.5" cy="226.5" r="11.9" fill="none" stroke="#cbd0d8" stroke-width="2.4"/><path d="M603.7 226.5 H615.3 M609.5 220.7 V232.3" stroke="#cbd0d8" stroke-width="2.2"/><circle cx="828.0" cy="226.5" r="11.9" fill="none" stroke="#cbd0d8" stroke-width="2.4"/><path d="M822.2 226.5 H833.8 M828.0 220.7 V232.3" stroke="#cbd0d8" stroke-width="2.2"/><circle cx="966.0" cy="226.5" r="11.9" fill="none" stroke="#cbd0d8" stroke-width="2.4"/><path d="M960.2 226.5 H971.8 M966.0 220.7 V232.3" stroke="#cbd0d8" stroke-width="2.2"/><path d="M2834.9 225.3 A7 7 0 0 1 2848.3 222.9 M2849.4 219.6 V223.6 H2845.2 M2848.9 226.3 A7 7 0 0 1 2835.5 228.7 M2834.4 232.4 V228.4 H2838.6" fill="none" stroke="#0e121b" stroke-width="1.6"/><path d="M1078.5 478 L1071.5 485 L1078.5 492 M1129.5 478 L1136.5 485 L1129.5 492" fill="none" stroke="#cdd1d9" stroke-width="2.3"/><path d="M1611.3 482 L1621.5 491.6 L1631.7 482" fill="none" stroke="#525866" stroke-width="2.2"/><path d="M1763.2 589.9 l5 5 l5 -5" fill="none" stroke="#525866" stroke-width="1.8"/><path d="M1763.2 696.4 l5 5 l5 -5" fill="none" stroke="#525866" stroke-width="1.8"/><path d="M1784.8 732.9 l5 5 l5 -5" fill="none" stroke="#525866" stroke-width="1.8"/><path d="M1806.4 806.1 l5 5 l5 -5" fill="none" stroke="#525866" stroke-width="1.8"/><path d="M2326.5 1062 l6.2 -6 l6.2 6 M2329.6 1273.6 l6.2 6 l6.2 -6" fill="none" stroke="#525866" stroke-width="2"/><path d="M2752.2 1119.8 V1116.4 H2762.8 V1128.2 H2759.6 M2748.6 1120.2 H2759.2 V1131.8 H2748.6 Z" fill="none" stroke="#99a0ae" stroke-width="1.8"/><path d="M2798.4 1128.4 l6.3 -6.4 l6.3 6.4" fill="none" stroke="#99a0ae" stroke-width="2"/><path d="M1725.6 1441.4 l4.7 4.4 l7.4 -8.5" fill="none" stroke="#fff" stroke-width="2.6"/><path d="M1725.6 1492.4 l4.7 4.4 l7.4 -8.5" fill="none" stroke="#fff" stroke-width="2.6"/><path d="M1725.6 1543.4 l4.7 4.4 l7.4 -8.5" fill="none" stroke="#fff" stroke-width="2.6"/><path d="M1760.6 1507.6 H2165.9" fill="none" stroke="#525866" stroke-width="1.4" stroke-dasharray="1.2 1.1"/><path d="M1760.6 1558.6 H2196.2" fill="none" stroke="#525866" stroke-width="1.4" stroke-dasharray="1.2 1.1"/><path d="M339 1553 L339 1570.5 L343.6 1566.6 L346.6 1573.4 L349.6 1572 L346.6 1565.4 L352.6 1565 Z" fill="#0c0910" stroke="#f4eefa" stroke-width="1.1" stroke-linejoin="round"/></svg>
<div class="b" style="left:1619px;top:936px;width:690px;height:535px;border:1px solid #e1e4ea;border-radius:14px;background:#fff;box-sizing:border-box;box-shadow:0 20px 50px -8px rgba(14,18,27,.09),0 4px 10px -2px rgba(14,18,27,.04);"></div>
<span class="t" style="left:1647.00px;top:969.56px;font-size:22.57px;color:#0e121b;letter-spacing:-0.429px;-webkit-text-stroke:0.65px #0e121b;">Raw Data</span>
<div class="b" style="left:1648px;top:1009px;width:631px;height:432px;border-radius:7px;background:#fafafb;"></div>
<span class="t" style="left:1661.40px;top:1025.63px;font-size:21.60px;color:#525866;font-family:'DejaVu Sans Mono', 'Liberation Mono', monospace;-webkit-text-stroke:0.10px #525866;">{</span>
<span class="t" style="left:1687.40px;top:1055.13px;font-size:21.60px;color:#525866;font-family:'DejaVu Sans Mono', 'Liberation Mono', monospace;-webkit-text-stroke:0.10px #525866;">"context": [</span>
<span class="t" style="left:1713.40px;top:1083.23px;font-size:21.60px;color:#525866;font-family:'DejaVu Sans Mono', 'Liberation Mono', monospace;-webkit-text-stroke:0.10px #525866;">{</span>
<span class="t" style="left:1739.40px;top:1112.03px;font-size:21.60px;color:#525866;font-family:'DejaVu Sans Mono', 'Liberation Mono', monospace;-webkit-text-stroke:0.10px #525866;">"id": "acme-corp",</span>
<span class="t" style="left:1739.40px;top:1140.83px;font-size:21.60px;color:#525866;font-family:'DejaVu Sans Mono', 'Liberation Mono', monospace;-webkit-text-stroke:0.10px #525866;">"type": "tenant",</span>
<span class="t" style="left:1739.40px;top:1169.63px;font-size:21.60px;color:#525866;font-family:'DejaVu Sans Mono', 'Liberation Mono', monospace;-webkit-text-stroke:0.10px #525866;">"data": {</span>
<span class="t" style="left:1765.40px;top:1199.13px;font-size:21.60px;color:#525866;font-family:'DejaVu Sans Mono', 'Liberation Mono', monospace;-webkit-text-stroke:0.10px #525866;">"plan": "premium",</span>
<span class="t" style="left:1765.40px;top:1227.23px;font-size:21.60px;color:#525866;font-family:'DejaVu Sans Mono', 'Liberation Mono', monospace;-webkit-text-stroke:0.10px #525866;">"region": "us-east"</span>
<span class="t" style="left:1739.40px;top:1256.03px;font-size:21.60px;color:#525866;font-family:'DejaVu Sans Mono', 'Liberation Mono', monospace;-webkit-text-stroke:0.10px #525866;">},</span>
<span class="t" style="left:1739.40px;top:1284.83px;font-size:21.60px;color:#525866;font-family:'DejaVu Sans Mono', 'Liberation Mono', monospace;-webkit-text-stroke:0.10px #525866;">"createdAt": "2025-10-10T13:41:32.299Z",</span>
<span class="t" style="left:1739.40px;top:1313.63px;font-size:21.60px;color:#525866;font-family:'DejaVu Sans Mono', 'Liberation Mono', monospace;-webkit-text-stroke:0.10px #525866;">"updatedAt": "2025-10-13T17:25:51.421Z"</span>
<span class="t" style="left:1713.40px;top:1343.13px;font-size:21.60px;color:#525866;font-family:'DejaVu Sans Mono', 'Liberation Mono', monospace;-webkit-text-stroke:0.10px #525866;">}</span>
<span class="t" style="left:1687.40px;top:1371.23px;font-size:21.60px;color:#525866;font-family:'DejaVu Sans Mono', 'Liberation Mono', monospace;-webkit-text-stroke:0.10px #525866;">]</span>
<span class="t" style="left:1661.40px;top:1400.03px;font-size:21.60px;color:#525866;font-family:'DejaVu Sans Mono', 'Liberation Mono', monospace;-webkit-text-stroke:0.10px #525866;">}</span>
</div>
<script>(function(){var w=window.innerWidth||2880;if(Math.abs(w-2880)>1){var s=w/2880,r=document.getElementById("root");r.style.transformOrigin="0 0";r.style.transform="scale("+s+")";document.body.style.width=w+"px";document.body.style.height=Math.round(1626*s)+"px";}})();</script>
</body></html>
